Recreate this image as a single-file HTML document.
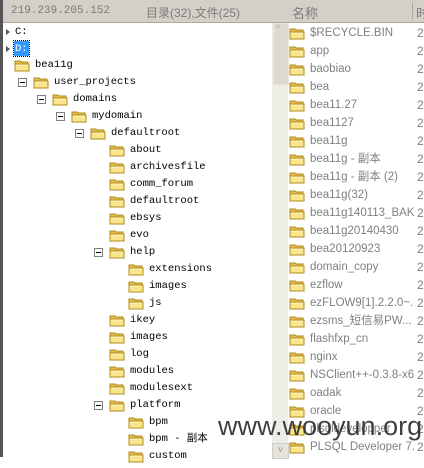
<!DOCTYPE html>
<html><head><meta charset="utf-8"><style>
body{margin:0;width:424px;height:457px;overflow:hidden;background:#fff;position:relative;font-family:"Liberation Sans","Noto Sans CJK SC",sans-serif}
.a{position:absolute}
.hdr{top:0;left:0;width:424px;height:22px;background:#d4d0c8;border-bottom:1px solid #aca899}
.f{position:absolute;width:16px;height:13px}
.t{position:absolute;font-family:"Liberation Mono","Noto Sans CJK SC",monospace;font-size:10.5px;color:#000;line-height:12px;white-space:nowrap}
.m{position:absolute;width:7px;height:7px;border:1px solid #808080;background:#fff}
.m:after{content:"";position:absolute;left:1px;top:3px;width:5px;height:1px;background:#000}
.r{position:absolute;left:310px;width:104px;overflow:hidden;font-size:11.5px;color:#808080;line-height:14px;white-space:nowrap}
.d{position:absolute;left:417px;font-size:12px;color:#808080;line-height:14px}
</style></head><body>
<svg width="0" height="0" style="position:absolute"><defs>
<symbol id="fd" viewBox="0 0 16 13"><path d="M1 2h5l1 1h7v9H1z" fill="#e8c14a" stroke="#b08a1c"/><path d="M1 5h14v7H1z" fill="#fbe58c" stroke="#b08a1c"/><path d="M2 6h12" stroke="#fff7cc"/></symbol>
</defs></svg>
<div class="a hdr"></div>
<div class="a" style="left:0;top:0;width:3px;height:457px;background:#555"></div>
<div class="a" style="left:11px;top:5px;font-family:'Liberation Mono',monospace;font-size:11px;color:#7a7a7a">219.239.205.152</div>
<div class="a" style="left:146px;top:4px;font-size:12px;color:#7a7a7a;font-family:'Liberation Sans','Noto Sans CJK SC',sans-serif">目录(32),文件(25)</div>
<div class="a" style="left:292px;top:3px;font-size:13px;color:#7a7a7a;font-family:'Liberation Sans','Noto Sans CJK SC',sans-serif">名称</div>
<div class="a" style="left:412px;top:3px;width:1px;height:16px;background:#aca899"></div>
<div class="a" style="left:416px;top:3px;font-size:13px;color:#7a7a7a;font-family:'Noto Sans CJK SC',sans-serif">时</div>
<div class="a" style="left:272px;top:23px;width:16px;height:434px;background:#eeede5"></div>
<div class="a" style="left:273px;top:23px;width:14px;height:60px;background:#dedad0;border:1px solid #e8e6dc"></div>
<div class="a" style="left:276px;top:23px;font-size:9px;color:#aaa">^</div>
<div class="a" style="left:272px;top:443px;width:15px;height:14px;background:#e6e3da;border:1px solid #ccc;font-size:9px;color:#999;text-align:center">v</div>
<div class="a" style="left:6px;top:29px;width:0;height:0;border-left:4px solid #555;border-top:3px solid transparent;border-bottom:3px solid transparent"></div>
<div class="t" style="left:15px;top:26px">C:</div>
<div class="a" style="left:6px;top:46px;width:0;height:0;border-left:4px solid #555;border-top:3px solid transparent;border-bottom:3px solid transparent"></div>
<div class="a" style="left:14px;top:41px;width:15px;height:15px;background:#3399ff;outline:1px dotted #000"></div>
<div class="t" style="left:15px;top:43px;color:#fff">D:</div>
<div class="f" style="left:14px;top:59px"><svg width="16" height="13"><use href="#fd"/></svg></div><div class="t" style="left:35px;top:59px">bea11g</div>
<div class="m" style="left:18px;top:78px"></div><div class="f" style="left:33px;top:76px"><svg width="16" height="13"><use href="#fd"/></svg></div><div class="t" style="left:54px;top:76px">user_projects</div>
<div class="m" style="left:37px;top:95px"></div><div class="f" style="left:52px;top:93px"><svg width="16" height="13"><use href="#fd"/></svg></div><div class="t" style="left:73px;top:93px">domains</div>
<div class="m" style="left:56px;top:112px"></div><div class="f" style="left:71px;top:110px"><svg width="16" height="13"><use href="#fd"/></svg></div><div class="t" style="left:92px;top:110px">mydomain</div>
<div class="m" style="left:75px;top:129px"></div><div class="f" style="left:90px;top:127px"><svg width="16" height="13"><use href="#fd"/></svg></div><div class="t" style="left:111px;top:127px">defaultroot</div>
<div class="f" style="left:109px;top:144px"><svg width="16" height="13"><use href="#fd"/></svg></div><div class="t" style="left:130px;top:144px">about</div>
<div class="f" style="left:109px;top:161px"><svg width="16" height="13"><use href="#fd"/></svg></div><div class="t" style="left:130px;top:161px">archivesfile</div>
<div class="f" style="left:109px;top:178px"><svg width="16" height="13"><use href="#fd"/></svg></div><div class="t" style="left:130px;top:178px">comm_forum</div>
<div class="f" style="left:109px;top:195px"><svg width="16" height="13"><use href="#fd"/></svg></div><div class="t" style="left:130px;top:195px">defaultroot</div>
<div class="f" style="left:109px;top:212px"><svg width="16" height="13"><use href="#fd"/></svg></div><div class="t" style="left:130px;top:212px">ebsys</div>
<div class="f" style="left:109px;top:229px"><svg width="16" height="13"><use href="#fd"/></svg></div><div class="t" style="left:130px;top:229px">evo</div>
<div class="m" style="left:94px;top:248px"></div><div class="f" style="left:109px;top:246px"><svg width="16" height="13"><use href="#fd"/></svg></div><div class="t" style="left:130px;top:246px">help</div>
<div class="f" style="left:128px;top:263px"><svg width="16" height="13"><use href="#fd"/></svg></div><div class="t" style="left:149px;top:263px">extensions</div>
<div class="f" style="left:128px;top:280px"><svg width="16" height="13"><use href="#fd"/></svg></div><div class="t" style="left:149px;top:280px">images</div>
<div class="f" style="left:128px;top:297px"><svg width="16" height="13"><use href="#fd"/></svg></div><div class="t" style="left:149px;top:297px">js</div>
<div class="f" style="left:109px;top:314px"><svg width="16" height="13"><use href="#fd"/></svg></div><div class="t" style="left:130px;top:314px">ikey</div>
<div class="f" style="left:109px;top:331px"><svg width="16" height="13"><use href="#fd"/></svg></div><div class="t" style="left:130px;top:331px">images</div>
<div class="f" style="left:109px;top:348px"><svg width="16" height="13"><use href="#fd"/></svg></div><div class="t" style="left:130px;top:348px">log</div>
<div class="f" style="left:109px;top:365px"><svg width="16" height="13"><use href="#fd"/></svg></div><div class="t" style="left:130px;top:365px">modules</div>
<div class="f" style="left:109px;top:382px"><svg width="16" height="13"><use href="#fd"/></svg></div><div class="t" style="left:130px;top:382px">modulesext</div>
<div class="m" style="left:94px;top:401px"></div><div class="f" style="left:109px;top:399px"><svg width="16" height="13"><use href="#fd"/></svg></div><div class="t" style="left:130px;top:399px">platform</div>
<div class="f" style="left:128px;top:416px"><svg width="16" height="13"><use href="#fd"/></svg></div><div class="t" style="left:149px;top:416px">bpm</div>
<div class="f" style="left:128px;top:433px"><svg width="16" height="13"><use href="#fd"/></svg></div><div class="t" style="left:149px;top:433px">bpm - 副本</div>
<div class="f" style="left:128px;top:450px"><svg width="16" height="13"><use href="#fd"/></svg></div><div class="t" style="left:149px;top:450px">custom</div>
<div id="rl"></div>
<script>
var n=["$RECYCLE.BIN","app","baobiao","bea","bea11.27","bea1127","bea11g","bea11g - 副本","bea11g - 副本 (2)","bea11g(32)","bea11g140113_BAK","bea11g20140430","bea20120923","domain_copy","ezflow","ezFLOW9[1].2.2.0~...","ezsms_短信易PW...","flashfxp_cn","nginx","NSClient++-0.3.8-x64","oadak","oracle","plsqldevelopper","PLSQL Developer 7..."];
var h="";for(var i=0;i<n.length;i++){var y=26+i*18;h+='<div class="f" style="left:289px;top:'+(y+1)+'px"><svg width="16" height="13"><use href="#fd"/></svg></div><div class="r" style="top:'+y+'px">'+n[i]+'</div><div class="d" style="top:'+y+'px">2</div>';}
document.getElementById("rl").innerHTML=h;
</script>
<div class="a" style="left:218px;top:411px;font-size:27px;color:rgba(30,30,30,0.85);font-family:'Liberation Sans',sans-serif">www.wooyun.org</div>
</body></html>
